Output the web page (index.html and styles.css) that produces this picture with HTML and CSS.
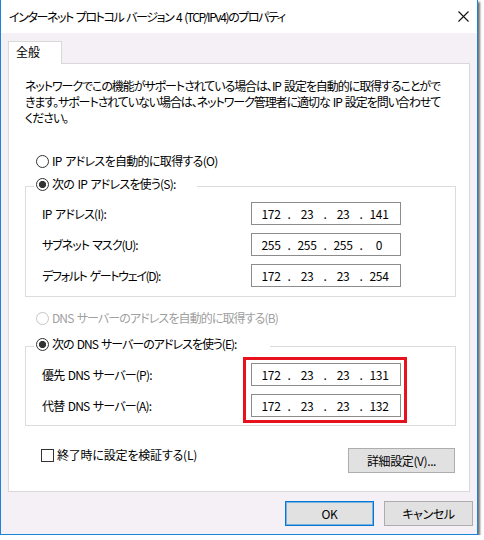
FILE: index.html
```html
<!DOCTYPE html>
<html lang="ja">
<head>
<meta charset="utf-8">
<title>インターネット プロトコル バージョン 4 (TCP/IPv4)のプロパティ</title>
<link rel="stylesheet" href="styles.css">
</head>
<body>
<div class="window">
  <div class="titlebar">
    <span class="title">インターネット プロトコル バージョン 4 (TCP/IPv4)のプロパティ</span>
    <svg class="close" width="11" height="11" viewBox="0 0 11 11"><path d="M0.5 0.5L10.5 10.5M10.5 0.5L0.5 10.5" stroke="#111" stroke-width="1.1" fill="none"/></svg>
  </div>
  <div class="content">
    <div class="tabs"><div class="tab">全般</div></div>
    <div class="panel">
      <p class="desc">ネットワークでこの機能がサポートされている場合は、IP 設定を自動的に取得することがで<br>きます。サポートされていない場合は、ネットワーク管理者に適切な IP 設定を問い合わせて<br>ください。</p>

      <div class="radio-row r-auto"><span class="radio"></span><span>IP アドレスを自動的に取得する(O)</span></div>

      <fieldset class="group g-ip">
        <legend class="lg lg-ip"><span class="radio checked"></span><span>次の IP アドレスを使う(S):</span></legend>
        <div class="rows">
          <div class="row"><span class="lbl lbl-ip">IP アドレス(I):</span><div class="ipbox"><span class="seg">172</span><span class="dot">.</span><span class="seg">23</span><span class="dot">.</span><span class="seg">23</span><span class="dot">.</span><span class="seg">141</span></div></div>
          <div class="row"><span class="lbl lbl-mask">サブネット マスク(U):</span><div class="ipbox"><span class="seg">255</span><span class="dot">.</span><span class="seg">255</span><span class="dot">.</span><span class="seg">255</span><span class="dot">.</span><span class="seg">0</span></div></div>
          <div class="row"><span class="lbl lbl-gw">デフォルト ゲートウェイ(D):</span><div class="ipbox"><span class="seg">172</span><span class="dot">.</span><span class="seg">23</span><span class="dot">.</span><span class="seg">23</span><span class="dot">.</span><span class="seg">254</span></div></div>
        </div>
      </fieldset>

      <div class="radio-row r-dns disabled"><span class="radio"></span><span>DNS サーバーのアドレスを自動的に取得する(B)</span></div>

      <fieldset class="group g-dns">
        <legend class="lg lg-dns"><span class="radio checked"></span><span>次の DNS サーバーのアドレスを使う(E):</span></legend>
        <div class="rows dns-rows">
          <div class="row"><span class="lbl lbl-dns">優先 DNS サーバー(P):</span><div class="ipbox"><span class="seg">172</span><span class="dot">.</span><span class="seg">23</span><span class="dot">.</span><span class="seg">23</span><span class="dot">.</span><span class="seg">131</span></div></div>
          <div class="row"><span class="lbl lbl-dns">代替 DNS サーバー(A):</span><div class="ipbox"><span class="seg">172</span><span class="dot">.</span><span class="seg">23</span><span class="dot">.</span><span class="seg">23</span><span class="dot">.</span><span class="seg">132</span></div></div>
          <div class="highlight"></div>
        </div>
      </fieldset>

      <div class="bottom-row">
        <div class="check-row"><span class="checkbox"></span><span>終了時に設定を検証する(L)</span></div>
        <button class="btn btn-adv">詳細設定(V)...</button>
      </div>
    </div>
  </div>
  <div class="footer">
    <button class="btn btn-ok">OK</button>
    <button class="btn">キャンセル</button>
  </div>
</div>
</body>
</html>
```

FILE: styles.css
```css
* { box-sizing: border-box; }

body {
  margin: 0;
  background: #ffffff;
  font-family: "Noto Sans CJK JP", "Noto Sans", sans-serif;
  font-size: 12px;
  line-height: 16px;
  color: #000;
  font-feature-settings: "palt";
  letter-spacing: -0.6px;
  word-spacing: 1.5px;
}

.window {
  width: 478px;
  height: 535px;
  border: 1px solid #1a84d8;
  border-top: none;
  background: #f5f0f5;
  box-shadow: 2px 2px 2px rgba(0, 0, 0, 0.55);
  display: flex;
  flex-direction: column;
}

.titlebar {
  height: 33px;
  flex: none;
  background: #ffffff;
  display: flex;
  align-items: center;
  justify-content: space-between;
  padding: 0 8px 0 8px;
}

.title {
  white-space: nowrap;
  letter-spacing: -1.4px;
}

.close { display: block; }

.content { padding: 8px 7px 0; }

.tabs { display: flex; }

.tab {
  width: 54px;
  height: 23px;
  border: 1px solid #d9d9d9;
  border-bottom: none;
  background: #ffffff;
  padding: 2px 0 0 7px;
  position: relative;
  z-index: 1;
  margin-bottom: -1px;
  letter-spacing: 0;
}

.panel {
  height: 429px;
  border: 1px solid #d9d9d9;
  background: #ffffff;
  padding: 14px 13px 0 16px;
}

.desc {
  margin: 0;
  white-space: nowrap;
  letter-spacing: -1.07px;
}

.radio-row {
  display: flex;
  align-items: center;
  gap: 3px;
  height: 16px;
  padding-left: 11px;
  white-space: nowrap;
}

.r-auto { margin-top: 27px; letter-spacing: -0.68px; }
.r-dns { margin-top: 13px; letter-spacing: -0.9px; }

.disabled { color: #a0a0a0; }

.radio {
  width: 13px;
  height: 13px;
  flex: none;
  border: 1px solid #333333;
  border-radius: 50%;
  background: #ffffff;
}

.radio.checked {
  background: radial-gradient(circle, #333333 0 3.3px, #ffffff 3.9px);
}

.disabled .radio { border-color: #c4c4c4; }

.group {
  margin: 0;
  min-width: 0;
  border: 1px solid #dcdcdc;
  padding: 6px 54px 9px 16px;
}

.g-ip { margin-top: 7px; }
.g-dns { margin-top: 10px; padding-top: 7px; padding-bottom: 8px; }

.lg {
  margin-left: -8px;
  padding: 0 0 4px 2px;
  height: 20px;
  display: flex;
  align-items: center;
  gap: 3px;
  white-space: nowrap;
}

.lg-ip { width: 163px; letter-spacing: -0.78px; }
.lg-dns { width: 236px; letter-spacing: -1px; }

.rows {
  display: flex;
  flex-direction: column;
  gap: 8px;
}

.dns-rows { position: relative; }

.row {
  height: 23px;
  display: flex;
  align-items: center;
  justify-content: space-between;
}

.lbl { white-space: nowrap; }
.lbl-ip { letter-spacing: -0.75px; }
.lbl-mask { letter-spacing: -1px; }
.lbl-gw { letter-spacing: -1.3px; }
.lbl-dns { letter-spacing: -0.8px; }

.ipbox {
  width: 150px;
  height: 23px;
  border: 1px solid #8c8c8c;
  background: #ffffff;
  padding-left: 1px;
  display: flex;
  align-items: center;
  letter-spacing: -0.3px;
}

.seg {
  width: 36px;
  text-align: center;
}

.dot {
  width: 0;
  display: flex;
  justify-content: center;
}

.highlight {
  position: absolute;
  top: -6px;
  bottom: -6px;
  right: -6px;
  width: 164px;
  border: 3px solid #e6121e;
  pointer-events: none;
}

.bottom-row {
  margin-top: 22px;
  padding-left: 16px;
  display: flex;
  justify-content: space-between;
  align-items: flex-start;
}

.check-row {
  margin-top: -1px;
  height: 16px;
  display: flex;
  align-items: center;
  gap: 3px;
  white-space: nowrap;
  letter-spacing: -0.2px;
}

.checkbox {
  width: 13px;
  height: 13px;
  border: 1px solid #333333;
  background: #ffffff;
  flex: none;
}

.btn {
  height: 25px;
  width: 89px;
  padding: 0;
  border: 1px solid #adadad;
  background: #e1e1e1;
  font-family: inherit;
  font-size: 12px;
  line-height: 16px;
  color: #000;
  font-feature-settings: "palt";
  letter-spacing: -0.4px;
}

.btn-adv {
  width: 107px;
  margin-right: 1px;
}

.btn-ok {
  border-color: #0078d7;
  box-shadow: inset 0 0 0 1px rgba(0, 120, 215, 0.45);
}

.footer {
  display: flex;
  justify-content: flex-end;
  gap: 10px;
  padding: 9px 4px 0 0;
}
```
